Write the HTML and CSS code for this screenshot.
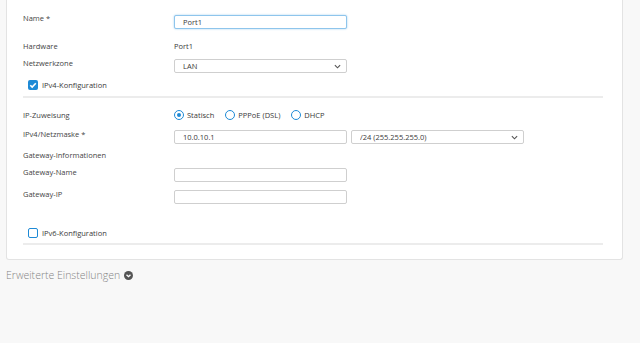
FILE: index.html
```html
<html lang="de">

<head>
    <meta charset="UTF-8">
    <title>Port1</title>
    <link rel="stylesheet" href="styles.css">
</head>

<body>
    <div class="card">
        <div class="row name-row">
            <label class="lbl" for="name">Name *</label>
            <input class="field focused" id="name" type="text" value="Port1">
        </div>
        <div class="row text-row hw-row">
            <span class="lbl">Hardware</span>
            <span class="value">Port1</span>
        </div>
        <div class="row zone-row">
            <label class="lbl" for="zone">Netzwerkzone</label>
            <div class="select-wrap">
                <select class="field" id="zone">
                    <option>LAN</option>
                </select>
                <svg class="chev" viewBox="0 0 8 5" width="7" height="5"><path d="M1 1l3 3 3-3" fill="none" stroke="#555" stroke-width="1.3"/></svg>
            </div>
        </div>
        <div class="check-row v4">
            <span class="box checked">
                <svg viewBox="0 0 10 10" width="10" height="10"><path d="M2.3 5.2l1.9 1.9 3.6-3.8" fill="none" stroke="#fff" stroke-width="1.6"/></svg>
            </span>
            <span class="check-label">IPv4-Konfiguration</span>
        </div>
        <div class="sep"></div>

        <div class="row text-row radio-row">
            <span class="lbl">IP-Zuweisung</span>
            <div class="radios">
                <span class="radio on"></span><span class="radio-label">Statisch</span>
                <span class="radio"></span><span class="radio-label">PPPoE (DSL)</span>
                <span class="radio"></span><span class="radio-label">DHCP</span>
            </div>
        </div>
        <div class="row ip-row">
            <label class="lbl" for="ip">IPv4/Netzmaske *</label>
            <input class="field" id="ip" type="text" value="10.0.10.1">
            <div class="select-wrap mask">
                <select class="field">
                    <option>/24 (255.255.255.0)</option>
                </select>
                <svg class="chev" viewBox="0 0 8 5" width="7" height="5"><path d="M1 1l3 3 3-3" fill="none" stroke="#555" stroke-width="1.3"/></svg>
            </div>
        </div>
        <div class="row text-row gw-info">
            <span class="lbl wide">Gateway-Informationen</span>
        </div>
        <div class="row gw-name">
            <label class="lbl" for="gwname">Gateway-Name</label>
            <input class="field" id="gwname" type="text">
        </div>
        <div class="row gw-ip">
            <label class="lbl" for="gwip">Gateway-IP</label>
            <input class="field" id="gwip" type="text">
        </div>

        <div class="check-row v6">
            <span class="box"></span>
            <span class="check-label">IPv6-Konfiguration</span>
        </div>
        <div class="sep last"></div>
    </div>

    <div class="advanced">
        <span>Erweiterte Einstellungen</span>
        <svg viewBox="0 0 10 10" width="9" height="9"><circle cx="5" cy="5" r="5" fill="#555"/><path d="M2.8 4.1l2.2 2.2 2.2-2.2" fill="none" stroke="#fff" stroke-width="1.5"/></svg>
    </div>
</body>

</html>
```

FILE: styles.css
```css
:root {
    --blue: #1e8ad6;
    --text: #3a3a3a;
    --border: #cfcfcf;
    --line: #ececec;
}

* {
    margin: 0;
    padding: 0;
    box-sizing: border-box;
}

body {
    font-family: "Open Sans", "Noto Sans", sans-serif;
    background-color: #f8f8f8;
    color: var(--text);
    font-size: 7.5px;
}

.card {
    margin-left: 6px;
    width: 617px;
    background: #fff;
    border: 1px solid #e3e3e3;
    border-top: none;
    border-radius: 0 0 3px 3px;
    padding: 14px 19px 14px 16px;
}

.row {
    display: flex;
    align-items: flex-start;
}

.lbl {
    display: block;
    width: 151px;
    flex-shrink: 0;
    line-height: 9px;
    color: #444;
}

.lbl.wide {
    width: auto;
}

.field {
    appearance: none;
    -webkit-appearance: none;
    width: 173px;
    height: 14px;
    border: 1px solid var(--border);
    border-radius: 2px;
    background: #fff;
    font-family: inherit;
    font-size: 7.5px;
    color: var(--text);
    padding: 0 8px;
    outline: none;
}

.field.focused {
    border-color: #8ec5ec;
    box-shadow: 0 0 2px rgba(30, 138, 214, 0.45);
}

.name-row .field {
    margin-top: 1px;
}

.text-row {
    height: 10px;
    line-height: 10px;
}

.text-row .lbl {
    line-height: 10px;
}

.hw-row { margin-top: 12px; }
.zone-row { margin-top: 8px; }
.radio-row { margin-top: 12px; }
.ip-row { margin-top: 10px; }
.gw-info { margin-top: 6px; }
.gw-name { margin-top: 8px; }
.gw-ip { margin-top: 8px; }

.value {
    line-height: 10px;
}

.select-wrap {
    position: relative;
    width: 173px;
}

.select-wrap.mask {
    margin-left: 4px;
}

.select-wrap .chev {
    position: absolute;
    right: 6px;
    top: 5px;
}

.check-row {
    display: flex;
    align-items: center;
    height: 10px;
    padding-left: 5px;
}

.check-row.v4 { margin-top: 7px; }
.check-row.v6 { margin-top: 24px; }

.box {
    width: 10px;
    height: 10px;
    border: 1.2px solid var(--blue);
    border-radius: 2px;
    display: flex;
}

.box.checked {
    background: var(--blue);
    border: none;
}

.check-label {
    margin-left: 4px;
    line-height: 10px;
}

.sep {
    height: 2px;
    background: var(--line);
    margin-top: 6px;
}

.sep.last {
    margin-top: 5px;
}

.radios {
    display: flex;
    align-items: center;
    height: 10px;
}

.radio {
    width: 10px;
    height: 10px;
    border: 1.3px solid var(--blue);
    border-radius: 50%;
    display: flex;
    align-items: center;
    justify-content: center;
}

.radio.on::after {
    content: "";
    width: 4px;
    height: 4px;
    border-radius: 50%;
    background: var(--blue);
}

.radio-label {
    margin-left: 3px;
    margin-right: 11px;
}

.advanced {
    display: flex;
    align-items: center;
    gap: 4px;
    margin: 8px 0 0 6px;
    font-size: 10.5px;
    font-weight: 300;
    color: #858585;
    font-family: "Open Sans", sans-serif;
}
```
